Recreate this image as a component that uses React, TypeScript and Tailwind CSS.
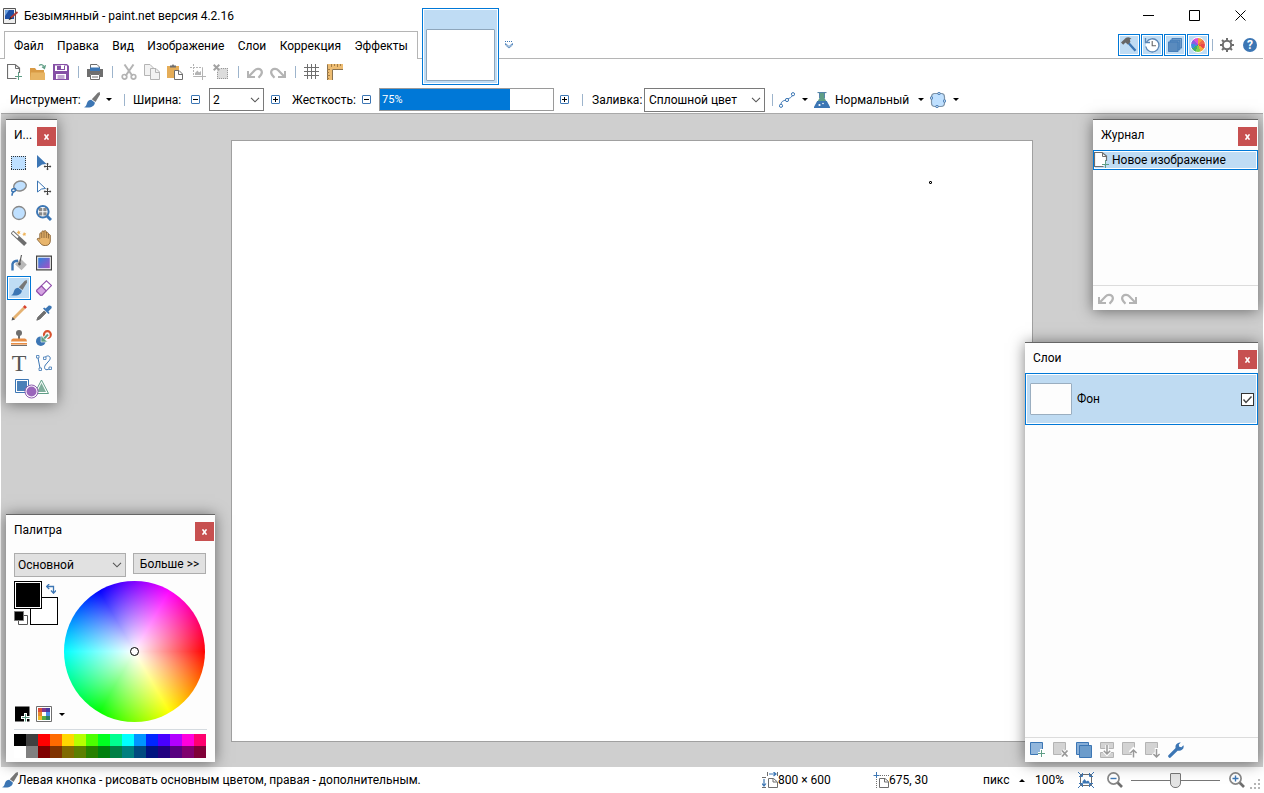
import { useState } from 'react'
import type { ReactNode } from 'react'

const GREY = '#6e6e6e'
const BLUE = '#3c76b4'
const GREEN = '#5f9e86'
const OFF = '#b4b4b4'

function Icon({ children, size = 16, box = 16 }: { children: ReactNode; size?: number; box?: number }) {
  return (
    <svg width={size} height={size} viewBox={`0 0 ${box} ${box}`} fill="none" className="shrink-0" aria-hidden="true">
      {children}
    </svg>
  )
}

function NewFile() {
  return (
    <Icon>
      <path d="M9.5 14.5H.5V.5H8L12.5 4V9" stroke={GREY} strokeWidth="1.2" fill="#fff" />
      <path d="M8.5 1V4.5H12.5" stroke={GREY} />
      <path d="M11.5 8V16M8 12.5H15" stroke={GREEN} />
    </Icon>
  )
}

function Brush() {
  return (
    <Icon>
      <path d="M15.8 0 16 2.5 11.5 10 7.8 7.2 13.8.8Z" fill="#777" />
      <path d="M7.2 7.8 10.8 10.6C11 14 7 16.6 0 15.2 2.5 14.5 2.2 13 3 11 3.8 8.8 5.5 7.8 7.2 7.8Z" fill={BLUE} />
    </Icon>
  )
}

function Undo({ color = OFF }: { color?: string }) {
  return (
    <Icon>
      <path d="M1 7V13H8" stroke={color} strokeWidth="2" />
      <path d="M1.5 12.8 7.5 6.5C9.5 4.4 12.5 4.4 14 6 15.6 8 14.8 10.8 11.5 13.8" stroke={color} strokeWidth="2.2" />
    </Icon>
  )
}

function Redo({ color = OFF }: { color?: string }) {
  return (
    <Icon>
      <path d="M15 7V13H8" stroke={color} strokeWidth="2" />
      <path d="M14.5 12.8 8.5 6.5C6.5 4.4 3.5 4.4 2 6 .4 8 1.2 10.8 4.5 13.8" stroke={color} strokeWidth="2.2" />
    </Icon>
  )
}

function Layers({ size = 16 }: { size?: number }) {
  return (
    <Icon size={size}>
      <path d="M4.5.5H15.5V11.5H4.5Z" fill="#7ea6cf" stroke={BLUE} />
      <path d="M2.5 2.5H13.5V13.5H2.5Z" fill="#6795c4" stroke={BLUE} />
      <path d="M.5 4.5H11.5V15.5H.5Z" fill="#5a8bbe" stroke={BLUE} />
    </Icon>
  )
}

function Caret() {
  return <span className="block h-0 w-0 shrink-0 border-x-[3px] border-t-[3px] border-x-transparent border-t-black" />
}

function Chevron() {
  return (
    <svg width="10" height="6" viewBox="0 0 10 6" fill="none" className="pointer-events-none absolute inset-y-0 right-1 my-auto" aria-hidden="true">
      <path d="M1 .8 5 4.8 9 .8" stroke="#555" strokeWidth="1.1" />
    </svg>
  )
}

function Sep() {
  return (
    <span className="flex h-3 w-1 shrink-0 justify-center">
      <span className="w-px bg-[#9db4cc]" />
    </span>
  )
}

const fileTools: { label: string; icon: ReactNode }[][] = [
  [
    { label: 'Создать', icon: <NewFile /> },
    {
      label: 'Открыть',
      icon: (
        <Icon>
          <path d="M0 16V4H5L6.5 6H14V16Z" fill="#d99a44" />
          <path d="M0 16 1 8.5H15V16Z" fill="#e8b564" />
          <path d="M9 1.5C11.5-.2 14 1 14.5 4M12 2.8 14.5 4.5 15.5 1.2" stroke={GREEN} strokeWidth="1.2" />
        </Icon>
      ),
    },
    {
      label: 'Сохранить',
      icon: (
        <Icon>
          <path d="M0 0H14L16 2V16H0Z" fill="#8650a6" />
          <path d="M2 1.5H14V7H2ZM3 10H13V15H3Z" fill="#fff" />
          <path d="M4 2H12V6H4Z" fill="#8650a6" />
          <path d="M8 1H11V5H8Z" fill="#fff" />
          <path d="M4.5 12H11.5M4.5 14H11.5" stroke="#8650a6" />
        </Icon>
      ),
    },
  ],
  [
    {
      label: 'Печать',
      icon: (
        <Icon>
          <path d="M3.5 6V.5H10L12.5 3V6" fill="#fff" stroke={GREY} />
          <path d="M0 5H16V13H13V10H3V13H0Z" fill={GREY} />
          <path d="M3 3.5H13V7H3Z" fill={BLUE} />
          <path d="M3.5 10.5H12.5V15.5H3.5Z" fill="#fff" stroke={GREY} />
          <path d="M5 13H11" stroke={GREY} />
        </Icon>
      ),
    },
  ],
  [
    {
      label: 'Вырезать',
      icon: (
        <Icon>
          <path d="M3.5.5 11.5 12M12.5.5 4.5 12" stroke={OFF} strokeWidth="2" />
          <circle cx="3.5" cy="12.8" r="2.3" stroke={OFF} strokeWidth="1.7" />
          <circle cx="12.5" cy="12.8" r="2.3" stroke={OFF} strokeWidth="1.7" />
        </Icon>
      ),
    },
    {
      label: 'Копировать',
      icon: (
        <Icon>
          <path d="M.5.5H6L9.5 4V11.5H.5Z" fill="#f2f2f2" stroke={OFF} />
          <path d="M6.5 4.5H12L15.5 8V15.5H6.5Z" fill="#f2f2f2" stroke={OFF} />
          <path d="M11.5 5V8.5H15" stroke={OFF} />
        </Icon>
      ),
    },
    {
      label: 'Вставить',
      icon: (
        <Icon>
          <path d="M0 2H12V14H0Z" fill="#e5ad58" />
          <path d="M3 3.5V1.5H5L6 0 7 1.5H9V3.5Z" fill={GREY} />
          <path d="M7.5 6.5H12L15.5 10V15.5H7.5Z" fill="#fff" stroke={GREY} />
          <path d="M11.5 7V10.5H15" stroke={GREY} />
        </Icon>
      ),
    },
    {
      label: 'Обрезать',
      icon: (
        <Icon>
          <path d="M3.5 0V12.5H16M0 3.5H12.5V16" stroke={OFF} strokeDasharray="2 1" />
          <path d="M3.5 12.5H15.5M12.5 4V15.5" stroke={OFF} />
          <path d="M5 11V9L7.5 6.5 9 8.5 11 7V11Z" fill={OFF} />
        </Icon>
      ),
    },
    {
      label: 'Отменить выделение',
      icon: (
        <Icon>
          <path d="M4 4H15V15H4Z" fill="#dcdcdc" />
          <path d="M8 4.5H15M4.5 8V15M4 14.5H15M14.5 4V15" stroke="#999" strokeDasharray="1 1" />
          <path d="M.7.7 6.3 6.3M6.3.7.7 6.3" stroke="#a2a2a2" strokeWidth="2" />
        </Icon>
      ),
    },
  ],
  [
    { label: 'Отменить', icon: <Undo /> },
    { label: 'Вернуть', icon: <Redo /> },
  ],
  [
    {
      label: 'Сетка',
      icon: (
        <Icon>
          <path d="M3.5 0V15M7.5 0V15M11.5 0V15M0 3.5H15M0 7.5H15M0 11.5H15" stroke={GREY} />
        </Icon>
      ),
    },
    {
      label: 'Линейки',
      icon: (
        <Icon>
          <path d="M0 0H16V5H5V16H0Z" fill="#edbc72" />
          <path d="M.5 16V.5M5.5 5.5V16M5.5 5.5H16" stroke="#8a7350" />
          <path d="M4.5 0V3M7.5 0V2M10.5 0V3M13.5 0V2M0 5.5H3M0 8.5H2M0 11.5H3M0 14.5H2" stroke="#a47d45" />
        </Icon>
      ),
    },
  ],
]

const paintTools: { label: string; icon: ReactNode }[] = [
  {
    label: 'Выделение прямоугольной области',
    icon: (
      <Icon>
        <path d="M0 1H15V15H0Z" fill="#bfe0ff" />
        <path d="M0 1.5H15M0 14.5H15M.5 1V15M14.5 1V15" stroke="#333" strokeDasharray="1 1" />
      </Icon>
    ),
  },
  {
    label: 'Перемещение выделенных пикселей',
    icon: (
      <Icon>
        <path d="M1 0 10.5 9 6 9.5 1 13Z" fill={BLUE} />
        <path d="M11.5 8V15M8 11.5H15" stroke="#444" />
        <path d="M10 9.2 11.5 7.7 13 9.2ZM10 13.8 11.5 15.3 13 13.8ZM9.2 10 7.7 11.5 9.2 13ZM13.8 10 15.3 11.5 13.8 13Z" fill="#444" />
      </Icon>
    ),
  },
  {
    label: 'Лассо',
    icon: (
      <Icon>
        <ellipse cx="9" cy="6" rx="6.3" ry="4.9" transform="rotate(-14 9 6)" fill="#bfe0ff" stroke="#888" strokeWidth="1.4" />
        <path d="M3.5 8.5C0 8.5-.2 11.5 2 11.8 5 12 5.5 8.8 3.5 8.5M3 11.5C1 12.5 1 14 1 15.8" stroke={BLUE} strokeWidth="1.5" />
      </Icon>
    ),
  },
  {
    label: 'Перемещение области выделения',
    icon: (
      <Icon>
        <path d="M1.5 1 9.5 8.5 5.5 9 1.5 12Z" fill="#fff" stroke={BLUE} />
        <path d="M11.5 8V15M8 11.5H15" stroke="#444" />
        <path d="M10 9.2 11.5 7.7 13 9.2ZM10 13.8 11.5 15.3 13 13.8ZM9.2 10 7.7 11.5 9.2 13ZM13.8 10 15.3 11.5 13.8 13Z" fill="#444" />
      </Icon>
    ),
  },
  {
    label: 'Выделение овальной области',
    icon: (
      <Icon>
        <circle cx="8" cy="8" r="6.5" fill="#bfe0ff" stroke="#888" strokeWidth="1.3" />
      </Icon>
    ),
  },
  {
    label: 'Масштаб',
    icon: (
      <Icon>
        <path d="M11 11 15 15" stroke={BLUE} strokeWidth="3" />
        <circle cx="6.8" cy="6.8" r="5.8" fill="#fff" stroke={BLUE} strokeWidth="2" />
        <path d="M3 3H6.3V6.3H3ZM7.3 3H10.6V6.3H7.3ZM3 7.3H6.3V10.6H3ZM7.3 7.3H10.6V10.6H7.3Z" fill="#888" />
      </Icon>
    ),
  },
  {
    label: 'Волшебная палочка',
    icon: (
      <Icon>
        <path d="M1 2 14.5 14.5" stroke={GREY} strokeWidth="4" />
        <path d="M1.5 2.5 7 7.6" stroke="#fff" strokeWidth="2" />
        <path d="M7 0 8 1.5 9.5 1.2 8.8 2.6 9.5 4 8 3.6 7 5 6.8 3.3 5.4 2.6 6.8 1.8ZM13 2 13.8 3.2 15.2 3 14.4 4.2 15 5.6 13.6 5.2 12.6 6.2 12.4 4.8 11.2 4.2 12.5 3.6Z" fill="#efb45a" />
      </Icon>
    ),
  },
  {
    label: 'Перемещение',
    icon: (
      <Icon>
        <path d="M3.8 9V3.5Q4.8 2 5.8 3.5V1.6Q7 0 8 1.6V1.2Q9.2-.2 10.3 1.4V3Q11.4 1.8 12.4 3.2V5Q13.5 4 14.3 5.2V11Q14 15.3 9.8 15.5H8Q5.5 15.3 4 12.8L1 9.2Q1.8 7.3 3.8 9Z" fill="#e8b56c" stroke="#8a6435" strokeWidth=".9" />
        <path d="M5.8 3.5V8M8 1.8V8M10.3 2V8M12.4 4V8.5" stroke="#8a6435" strokeWidth=".9" />
      </Icon>
    ),
  },
  {
    label: 'Заливка',
    icon: (
      <Icon>
        <path d="M9.5 3.5 15.8 9.8 10.5 15.2 4 9.2Z" fill="#b9b9b9" />
        <path d="M10.5 0 8.5 9" stroke="#555" strokeWidth="1.1" />
        <circle cx="8.5" cy="9" r="1.4" fill="#555" />
        <path d="M1.5 15.5V9Q2.5 5.8 7 5.8" stroke={BLUE} strokeWidth="2.4" />
      </Icon>
    ),
  },
  {
    label: 'Градиент',
    icon: (
      <Icon>
        <defs>
          <linearGradient id="grad" x1="0" y1="0" x2="1" y2="1">
            <stop offset="0" stopColor="#2b83dd" />
            <stop offset="1" stopColor="#a64fc4" />
          </linearGradient>
        </defs>
        <path d="M.6 1.1H15.4V14.9H.6Z" fill="#fff" stroke="#444" strokeWidth="1.2" />
        <path d="M2.2 2.7H13.8V13.3H2.2Z" fill="url(#grad)" />
      </Icon>
    ),
  },
  { label: 'Кисть', icon: <Brush /> },
  {
    label: 'Ластик',
    icon: (
      <Icon>
        <path d="M10.5.8 15.5 5.5 6 15.2H4.5L.8 11.5V10.2Z" fill="#fff" stroke="#9250ac" strokeWidth="1.1" />
        <path d="M5.5 6 10.2 10.8 6 15.2H4.5L.8 11.5V10.2Z" fill="#d5a4e2" stroke="#9250ac" strokeWidth="1.1" />
      </Icon>
    ),
  },
  {
    label: 'Карандаш',
    icon: (
      <Icon>
        <path d="M2.5 13.5 13 3" stroke="#e5b272" strokeWidth="2.8" />
        <path d="M.5 15.5 1.5 12 4 14.5Z" fill="#555" />
        <path d="M12.8 1 15 3.2" stroke="#d8432e" strokeWidth="2.6" />
      </Icon>
    ),
  },
  {
    label: 'Пипетка',
    icon: (
      <Icon>
        <path d="M.8 15.2 2 12.2 8.2 6 10 7.8 3.8 14Z" fill={GREY} stroke={GREY} />
        <path d="M7 3.5 12.5 9 13.6 8 12.4 6.4 15.5 3.2Q16.5.2 12.8.5L9.6 3.6 8.2 2.4Z" fill={BLUE} />
      </Icon>
    ),
  },
  {
    label: 'Штамп',
    icon: (
      <Icon>
        <circle cx="8" cy="3" r="3" fill={GREY} />
        <path d="M7 5H9V9H7Z" fill={GREY} />
        <path d="M2 8.5H14Q16 9 16 11.5H0Q0 9 2 8.5Z" fill="#e78d45" />
        <path d="M0 13H16V14.6H0Z" fill="#e78d45" />
        <path d="M0 15.5H16" stroke={GREY} />
      </Icon>
    ),
  },
  {
    label: 'Замена цвета',
    icon: (
      <Icon>
        <circle cx="4.8" cy="11.2" r="4.8" fill={BLUE} />
        <circle cx="11.4" cy="4.6" r="3.4" stroke="#d8532f" strokeWidth="2.2" />
        <path d="M12.5 4.5 6.5 10.5" stroke="#fff" strokeWidth="4" />
        <path d="M12 4.5 7 9.8" stroke={GREEN} strokeWidth="2" />
        <path d="M5 5.5V12H11.5Z" fill={GREEN} stroke="#fff" strokeWidth=".6" />
      </Icon>
    ),
  },
  {
    label: 'Текст',
    icon: <span className="font-['Liberation_Serif',serif] text-[24px] leading-6 text-[#555]">T</span>,
  },
  {
    label: 'Линия или кривая',
    icon: (
      <Icon>
        <path d="M1.8 2 4.2 14M9 2.5C12-1 15.8 2 13.5 5.2L9.4 10C7 13.5 10 16.5 13.5 13.5" stroke={BLUE} />
        <path d="M.5.5H3V3H.5ZM3 13H5.5V15.5H3ZM7.5 2H10V4.5H7.5ZM13 12H15.5V14.5H13Z" fill="#fff" stroke={BLUE} strokeWidth=".8" />
      </Icon>
    ),
  },
]

const panelToggles: { label: string; icon: ReactNode }[] = [
  {
    label: 'Инструменты',
    icon: (
      <Icon>
        <path d="M7.5 6 14.5 13.8" stroke={BLUE} strokeWidth="2.4" />
        <path d="M0 5.5 5 .8Q8.5-.5 10.5 2L8.8 2.2 9.4 5 6.8 7.4 4.5 5.4 2.2 7.8Z" fill="#666" />
      </Icon>
    ),
  },
  {
    label: 'Журнал',
    icon: (
      <Icon>
        <circle cx="8.3" cy="8.3" r="6.5" fill="#fff" />
        <path d="M2.6 5A6.6 6.6 0 1 1 1.8 9.5" stroke="#5b86b5" strokeWidth="1.3" />
        <path d="M1.5 1V5.5H6" stroke="#5b86b5" strokeWidth="1.3" />
        <path d="M8.2 4V8.7H12" stroke="#666" strokeWidth="1.1" />
      </Icon>
    ),
  },
  { label: 'Слои', icon: <Layers size={14} /> },
  {
    label: 'Палитра',
    icon: (
      <span className="h-4 w-4 shrink-0 rounded-full border border-white bg-[conic-gradient(#f59a3c_0_40deg,#ef6a4a_40deg_80deg,#e84a4a_80deg_120deg,#f5a83c_120deg_160deg,#7ccf4a_160deg_200deg,#3fae6a_200deg_240deg,#3a8fe0_240deg_280deg,#8a5be0_280deg_320deg,#e04fd0_320deg)]" />
    ),
  },
]

const layerTools: { label: string; icon: ReactNode }[] = [
  {
    label: 'Добавить слой',
    icon: (
      <Icon>
        <path d="M.5.5H12.5V12.5H.5Z" fill="#93b7dc" stroke={BLUE} />
        <path d="M11.5 7V16M8 11.5H16" stroke="#fff" strokeWidth="3" />
        <path d="M11.5 8V15M8 11.5H15" stroke={GREEN} />
      </Icon>
    ),
  },
  {
    label: 'Удалить слой',
    icon: (
      <Icon>
        <path d="M.5.5H12.5V12.5H.5Z" fill="#d3d3d3" stroke={OFF} />
        <path d="M9 8.5 14.5 14.5M14.5 8.5 9 14.5" stroke="#fff" strokeWidth="3.5" />
        <path d="M9 8.5 14.5 14.5M14.5 8.5 9 14.5" stroke="#999" strokeWidth="1.8" />
      </Icon>
    ),
  },
  {
    label: 'Создать копию слоя',
    icon: (
      <Icon>
        <path d="M.5.5H12.5V12.5H.5Z" fill="#87aed7" stroke={BLUE} />
        <path d="M3.5 3.5H15.5V15.5H3.5Z" fill="#6c9ccb" stroke={BLUE} />
      </Icon>
    ),
  },
  {
    label: 'Объединить со следующим слоем',
    icon: (
      <Icon>
        <path d="M1.5.5H14.5V6.5H1.5ZM1.5 10.5H14.5V15.5H1.5Z" fill="#d3d3d3" stroke={OFF} />
        <path d="M8 3V12M4.5 8.5 8 12 11.5 8.5" stroke="#fff" strokeWidth="3.4" />
        <path d="M8 3V12M4.8 8.8 8 12 11.2 8.8" stroke="#999" strokeWidth="1.5" />
      </Icon>
    ),
  },
  {
    label: 'Переместить слой выше',
    icon: (
      <Icon>
        <path d="M.5.5H12.5V12.5H.5Z" fill="#d3d3d3" stroke={OFF} />
        <path d="M11.5 16V7M8 10.5 11.5 7 15 10.5" stroke="#fff" strokeWidth="3.4" />
        <path d="M11.5 15.5V8M8.4 11 11.5 8 14.6 11" stroke="#999" strokeWidth="1.5" />
      </Icon>
    ),
  },
  {
    label: 'Переместить слой ниже',
    icon: (
      <Icon>
        <path d="M.5.5H12.5V12.5H.5Z" fill="#d3d3d3" stroke={OFF} />
        <path d="M11.5 6V15M8 11.5 11.5 15 15 11.5" stroke="#fff" strokeWidth="3.4" />
        <path d="M11.5 7V14.8M8.4 12 11.5 15 14.6 12" stroke="#999" strokeWidth="1.5" />
      </Icon>
    ),
  },
  {
    label: 'Свойства слоя',
    icon: (
      <Icon>
        <path d="M1.8 14.2 9 7" stroke={BLUE} strokeWidth="3.2" strokeLinecap="round" />
        <path d="M12.8.6 10.8 2.6 11.2 4.8 13.4 5.2 15.4 3.2Q16.4 6 14 7.8 11.6 9.4 9.4 8.2L7.8 6.6Q6.8 4 8.6 2 10.4 0 12.8.6Z" fill={BLUE} />
      </Icon>
    ),
  },
]

const menu = ['Файл', 'Правка', 'Вид', 'Изображение', 'Слои', 'Коррекция', 'Эффекты']

const swatches = [
  '#000000', '#404040', '#ff0000', '#ff6a00', '#ffd800', '#b6ff00', '#4cff00', '#00ff21',
  '#00ff90', '#00ffff', '#0094ff', '#0026ff', '#4800ff', '#b200ff', '#ff00dc', '#ff006e',
  '#ffffff', '#808080', '#7f0000', '#7f3300', '#7f6a00', '#5b7f00', '#267f00', '#007f0e',
  '#007f46', '#007f7f', '#004a7f', '#00137f', '#21007f', '#57007f', '#7f006e', '#7f0037',
]

function IconButton({ label, children }: { label: string; children: ReactNode }) {
  return (
    <button aria-label={label} className="flex h-4 w-4 shrink-0 items-center justify-center">
      {children}
    </button>
  )
}

function Stepper({ plus }: { plus?: boolean }) {
  return (
    <button
      aria-label={plus ? 'Увеличить' : 'Уменьшить'}
      className="flex h-[9px] w-[9px] shrink-0 items-center justify-center rounded-[1px] border border-[#3c76b4]"
    >
      <svg width="5" height="5" viewBox="0 0 5 5" className="shrink-0" aria-hidden="true">
        <path d={plus ? 'M0 2.5H5M2.5 0V5' : 'M0 2.5H5'} stroke="#000" />
      </svg>
    </button>
  )
}

function Window({ title, className, children }: { title: string; className: string; children: ReactNode }) {
  return (
    <section className={`absolute flex flex-col border-t border-[#666] bg-[#fdfdfd] shadow-[0_1px_14px_rgba(0,0,0,0.5)] ${className}`}>
      <header className="flex h-[30px] shrink-0 items-center justify-between pr-px pl-2">
        <h2>{title}</h2>
        <button
          aria-label="Закрыть"
          className="mt-[3px] flex h-[19px] w-[19px] items-center justify-center bg-[#c75050]"
        >
          <svg width="5" height="6" viewBox="0 0 5 6" aria-hidden="true">
            <path d="M.5.3 4.5 5.7M4.5.3.5 5.7" stroke="#fff" strokeWidth="1.5" />
          </svg>
        </button>
      </header>
      {children}
    </section>
  )
}

function TitleBar() {
  return (
    <div className="flex h-[31px] items-center pr-px pl-[3px]">
      <Icon>
        <path d="M.5.5H12.5V15.5H.5Z" fill="#eee" stroke="#555" />
        <path d="M2 2H11V11H2Z" fill="#1d4fa3" />
        <path d="M2 2H6L2 8Z" fill="#6fa2df" />
        <path d="M14.5 4 7.5 10" stroke="#b03a32" strokeWidth="1.8" />
        <path d="M7.5 9 9 10.8 5.5 12.2Z" fill="#222" />
      </Icon>
      <h1 className="ml-[5px]">Безымянный - paint.net версия 4.2.16</h1>
      <div className="ml-auto flex">
        {[
          { label: 'Свернуть', d: 'M0 5.5H11' },
          { label: 'Развернуть', d: 'M.5.5H10.5V10.5H.5Z' },
          { label: 'Закрыть', d: 'M.5.5 10.5 10.5M10.5.5.5 10.5' },
        ].map((b) => (
          <button key={b.label} aria-label={b.label} className="flex h-[31px] w-[46px] items-center justify-center">
            <Icon size={11} box={11}>
              <path d={b.d} stroke="#000" />
            </Icon>
          </button>
        ))}
      </div>
    </div>
  )
}

function MenuBar() {
  return (
    <div className="mr-px flex h-7">
      <div className="w-1 border-b border-[#b5b5b5]" />
      <nav className="flex w-[414px] items-center justify-between border-x border-t border-[#b5b5b5] px-[9px]">
        {menu.map((m) => (
          <button key={m}>{m}</button>
        ))}
      </nav>
      <div className="flex flex-1 items-center border-b border-[#b5b5b5]">
        {/* image list: the selected thumbnail hangs over the neighbouring rows */}
        <div className="relative ml-1 h-full w-[77px]">
          <button
            aria-label="Безымянный"
            className="absolute -top-[23px] left-0 flex h-[77px] w-[77px] items-end border border-[#0078d7] bg-[#bfdcf4] p-[3px] ring-1 ring-white ring-inset"
          >
            <span className="h-[52px] w-full rounded-[1px] border border-[#8ea6bb] bg-white" />
          </button>
        </div>
        <button aria-label="Список изображений" className="ml-1.5">
          <Icon size={8} box={8}>
            <path d="M0 .5H8" stroke="#3c76b4" strokeDasharray="1 1" />
            <path d="M.5 2.5V4L4 7 7.5 4V2.5L4 5.5Z" fill="#fff" stroke="#3c76b4" strokeWidth=".8" />
          </Icon>
        </button>
        <div className="ml-auto flex items-center pr-[5px]">
          <div className="flex gap-px">
            {panelToggles.map((t) => (
              <button
                key={t.label}
                aria-label={t.label}
                className="flex h-[22px] w-[22px] items-center justify-center border border-[#0078d7] bg-[#bfdcf4] ring-1 ring-white ring-inset"
              >
                {t.icon}
              </button>
            ))}
          </div>
          <span className="mx-[3px] h-3 w-px bg-[#9db4cc]" />
          <div className="ml-[3px] flex gap-[7px]">
            <IconButton label="Параметры">
              <Icon>
                <circle cx="8" cy="8" r="4.2" stroke={GREY} strokeWidth="2" />
                <path d="M8 1V3.5M8 12.5V15M1 8H3.5M12.5 8H15M3 3 4.8 4.8M11.2 11.2 13 13M13 3 11.2 4.8M4.8 11.2 3 13" stroke={GREY} strokeWidth="2" />
              </Icon>
            </IconButton>
            <IconButton label="Справка">
              <span className="flex h-3.5 w-3.5 items-center justify-center rounded-full bg-[#3c76b4] text-[12px] leading-3 font-bold text-white">
                ?
              </span>
            </IconButton>
          </div>
        </div>
      </div>
    </div>
  )
}

function FileBar() {
  return (
    <div className="flex h-[27px] items-start gap-[7px] pt-[5px] pl-[7px]">
      {fileTools.flatMap((group, i) => [
        i > 0 && (
          <span key={`sep${i}`} className="flex h-4 items-center">
            <Sep />
          </span>
        ),
        ...group.map((t) => (
          <IconButton key={t.label} label={t.label}>
            {t.icon}
          </IconButton>
        )),
      ])}
    </div>
  )
}

function OptionsBar() {
  const [hardness, setHardness] = useState(75)
  return (
    <div className="mx-px flex h-7 items-center border-b border-[#a9a9a9]">
      <span className="ml-[9px] w-[74px]">Инструмент:</span>
      <button aria-label="Выбор инструмента" className="flex items-center gap-1.5">
        <Brush />
        <Caret />
      </button>
      <span className="ml-2.5"><Sep /></span>
      <label htmlFor="width" className="ml-[7px] w-[58px]">Ширина:</label>
      <Stepper />
      <div className="relative ml-[9px] w-[55px]">
        <select id="width" className="h-[23px] w-full appearance-none border border-[#7a7a7a] bg-white pl-[3px]">
          <option>2</option>
        </select>
        <Chevron />
      </div>
      <span className="ml-[7px] flex"><Stepper plus /></span>
      <label htmlFor="hardness" className="ml-3 w-[70px]">Жесткость:</label>
      <Stepper />
      <div className="relative ml-2 h-[23px] w-[175px] border border-[#9a9a9a] bg-white">
        <div className="flex h-full items-center bg-[#0078d7] pl-[2px] text-[11px] text-white" style={{ width: `${hardness}%` }}>
          {hardness}%
        </div>
        <input
          id="hardness"
          type="range"
          value={hardness}
          onChange={(e) => setHardness(Number(e.target.value))}
          className="absolute inset-0 h-full w-full opacity-0"
        />
      </div>
      <span className="ml-1.5 flex"><Stepper plus /></span>
      <span className="ml-[11px]"><Sep /></span>
      <label htmlFor="fill" className="ml-2 w-[52px]">Заливка:</label>
      <div className="relative w-[121px]">
        <select id="fill" className="h-6 w-full appearance-none border border-[#7a7a7a] bg-white pl-1">
          <option>Сплошной цвет</option>
        </select>
        <Chevron />
      </div>
      <span className="ml-[5px]"><Sep /></span>
      <button aria-label="Сглаживание" className="ml-[5px] flex items-center gap-[7px]">
        <Icon>
          <path d="M2 13C2 8 6 9 7.5 7.5S12 7 14 2.5" stroke={BLUE} />
          <circle cx="2" cy="13.8" r="1.6" fill="#fff" stroke={BLUE} />
          <circle cx="8" cy="8" r="1.6" fill="#fff" stroke={BLUE} />
          <circle cx="14" cy="2.2" r="1.6" fill="#fff" stroke={BLUE} />
        </Icon>
        <Caret />
      </button>
      <button aria-label="Режим смешивания" className="ml-1.5 flex items-center">
        <Icon>
          <path d="M5.5 1V6L1 14H15L10.5 6V1Z" fill={GREEN} />
          <path d="M3.5.5H12.5" stroke="#5585a8" strokeWidth="1.2" />
          <path d="M5.5 1V6M10.5 1V6" stroke="#5585a8" />
          <path d="M3.2 9H12.8L16 15V16H0V15Z" fill={BLUE} />
          <circle cx="5.5" cy="13" r="1.1" fill="#fff" />
          <circle cx="9" cy="11.5" r=".8" fill="#fff" />
        </Icon>
        <span className="ml-[5px] w-[83px] text-left">Нормальный</span>
        <Caret />
      </button>
      <button aria-label="Форма выделения" className="ml-1.5 flex items-center gap-[7px]">
        <Icon>
          <path d="M4 1.5H12Q14.5 2 14.5 5V11Q14.5 14.5 11 14.5H5Q1.5 14.5 1.5 11V5Q1.5 2 4 1.5Z" fill="#bfe0ff" stroke="#7f94a8" strokeWidth="1.2" />
          <path d="M8 .5H10V2.5H8ZM.5 5H2.5V7H.5ZM13.5 8H15.5V10H13.5ZM6 13.5H8V15.5H6Z" fill="#fff" stroke={BLUE} strokeWidth=".8" />
        </Icon>
        <Caret />
      </button>
    </div>
  )
}

function ToolsWindow() {
  const [tool, setTool] = useState('Кисть')
  return (
    <Window title="И..." className="top-[5px] left-[5px] w-[51px]">
      <div className="mt-px grid grid-cols-[24px_24px] gap-px pl-px">
        {paintTools.map((t) => (
          <button
            key={t.label}
            aria-label={t.label}
            onClick={() => setTool(t.label)}
            className={`flex h-6 w-6 items-center justify-center ${
              t.label === tool ? 'border border-[#0078d7] bg-[#bfdcf4] ring-1 ring-white ring-inset' : ''
            }`}
          >
            {t.icon}
          </button>
        ))}
      </div>
      <button aria-label="Фигуры" className="flex h-7 justify-center pt-1">
        <svg width="35" height="20" viewBox="0 0 35 20" aria-hidden="true">
          <path d="M1.5.5H14.5V13.5H1.5Z" fill="#fff" stroke={BLUE} />
          <path d="M3 2H13V12H3Z" fill="#4a80b8" />
          <path d="M27.5 1 34.5 14.5H20.5Z" fill="#fff" stroke={GREEN} />
          <path d="M27.5 4 32 13H23Z" fill="#7fae9b" />
          <circle cx="17.5" cy="12.5" r="6.5" fill="#fff" stroke="#8c5bae" />
          <circle cx="17.5" cy="12.5" r="5" fill="#9a66bb" />
        </svg>
      </button>
    </Window>
  )
}

function HistoryWindow() {
  return (
    <Window title="Журнал" className="top-[5px] right-[5px] h-[191px] w-[165px]">
      <ul className="flex-1">
        <li className="flex h-5 items-center gap-0.5 border border-[#0078d7] bg-[#bfdcf4] ring-1 ring-white ring-inset">
          <NewFile />
          <span>Новое изображение</span>
        </li>
      </ul>
      <div className="flex h-[25px] items-center gap-[7px] border-t border-[#dcdcdc] pl-[5px]">
        <IconButton label="Отменить"><Undo /></IconButton>
        <IconButton label="Вернуть"><Redo /></IconButton>
      </div>
    </Window>
  )
}

function LayersWindow() {
  const [visible, setVisible] = useState(true)
  return (
    <Window title="Слои" className="right-[5px] bottom-[5px] h-[420px] w-[233px]">
      <div className="flex-1">
        <label className="flex h-[52px] items-center border border-[#0078d7] bg-[#bfdbf2] pr-[3px] pl-1 ring-1 ring-white ring-inset">
          <span className="h-8 w-[42px] rounded-[1px] border border-[#9aaec0] bg-[#fdfdfd]" />
          <span className="ml-[5px]">Фон</span>
          <input
            type="checkbox"
            checked={visible}
            onChange={(e) => setVisible(e.target.checked)}
            className="peer ml-auto h-[13px] w-[13px] appearance-none border border-[#333] bg-white"
          />
          <svg
            width="13"
            height="13"
            viewBox="0 0 13 13"
            fill="none"
            className="pointer-events-none invisible -ml-[13px] peer-checked:visible"
            aria-hidden="true"
          >
            <path d="M2.5 6.5 5 9.5 10.5 3.5" stroke="#444" strokeWidth="1.4" />
          </svg>
        </label>
      </div>
      <div className="flex h-[25px] items-center gap-[7px] border-t border-[#dcdcdc] pl-[5px]">
        {layerTools.map((t) => (
          <IconButton key={t.label} label={t.label}>
            {t.icon}
          </IconButton>
        ))}
      </div>
    </Window>
  )
}

function PaletteWindow() {
  return (
    <Window title="Палитра" className="bottom-[5px] left-[5px] h-[248px] w-[209px]">
      <div className="mt-2 flex items-start gap-[7px] px-2">
        <div className="relative w-28">
          <select aria-label="Цвет" className="h-6 w-full appearance-none border border-[#adadad] bg-[#e1e1e1] pl-[3px]">
            <option>Основной</option>
          </select>
          <Chevron />
        </div>
        <button className="h-[21px] w-[73px] border border-[#adadad] bg-[#e1e1e1]">Больше &gt;&gt;</button>
      </div>
      <div className="mt-1 flex justify-between pr-[10px] pl-2">
        <div className="flex w-[50px] flex-col justify-between">
          <div className="relative h-11 w-11">
            <button aria-label="Дополнительный цвет" className="absolute right-0 bottom-0 h-7 w-7 border border-black bg-white" />
            <button aria-label="Основной цвет" className="absolute top-0 left-0 h-7 w-7 border border-black bg-black ring-1 ring-white ring-inset" />
            <button aria-label="Поменять цвета" className="absolute top-[3px] left-8">
              <Icon size={10} box={10}>
                <path d="M1 2.5H7.5V8.5" stroke={BLUE} strokeWidth="1.3" />
                <path d="M3.2 0 .6 2.5 3.2 5M5 6.5 7.5 9.2 10 6.5" stroke={BLUE} strokeWidth="1.3" />
              </Icon>
            </button>
            <button aria-label="Сбросить цвета" className="absolute bottom-0 left-0">
              <Icon size={14} box={14}>
                <path d="M4.5 4.5H13.5V13.5H4.5Z" fill="#fff" stroke="#555" />
                <path d="M.5.5H9.5V9.5H.5Z" fill="#000" stroke="#777" />
              </Icon>
            </button>
          </div>
          <div className="flex items-center gap-1.5">
            <IconButton label="Добавить цвет">
              <Icon>
                <path d="M1 .5H15.5V15.5H1Z" fill="#000" />
                <path d="M11.5 7V16M7 11.5H16" stroke="#fff" strokeWidth="3" />
                <path d="M11.5 8V15.5M8 11.5H15.5" stroke={GREEN} />
              </Icon>
            </IconButton>
            <button aria-label="Палитры" className="flex items-center gap-[7px]">
              <Icon>
                <path d="M.5.5H15.5V15.5H.5Z" fill="#fff" stroke={GREY} />
                <path d="M2 2H6V6H2Z" fill="#dd4b39" />
                <path d="M6 2H10V6H6Z" fill="#803a8c" />
                <path d="M10 2H14V6H10Z" fill="#4a3aa0" />
                <path d="M2 6H6V10H2Z" fill="#e98a2e" />
                <path d="M10 6H14V10H10Z" fill="#4b8be6" />
                <path d="M2 10H6V14H2Z" fill="#f0b929" />
                <path d="M6 10H10V14H6Z" fill="#55ad45" />
                <path d="M10 10H14V14H10Z" fill="#2c7f62" />
              </Icon>
              <Caret />
            </button>
          </div>
        </div>
        <div className="flex h-[141px] w-[141px] items-center justify-center rounded-full bg-[radial-gradient(closest-side,#fff,#fff0),conic-gradient(from_90deg,#f00,#ff0,#0f0,#0ff,#00f,#f0f,#f00)]">
          <span className="h-[9px] w-[9px] rounded-full border border-black bg-white" />
        </div>
      </div>
      <div className="mx-2 mt-[7px] border-t border-[#d5dbe0]" />
      <div className="mt-1 grid grid-cols-[repeat(16,12px)] pl-2">
        {swatches.map((c) => (
          <button key={c} aria-label={c} className="h-3 w-3" style={{ backgroundColor: c }} />
        ))}
      </div>
    </Window>
  )
}

function StatusBar() {
  return (
    <footer className="flex h-[26px] items-center pr-1 pl-[2px]">
      <Brush />
      <p>Левая кнопка - рисовать основным цветом, правая - дополнительным.</p>
      <div className="ml-auto flex w-[111px] items-center">
        <Icon>
          <path d="M6.5 15.5V6.5H11.5L15.5 10V15.5Z" fill="#fff" stroke={GREY} />
          <path d="M11 6.5V10H15" stroke={GREY} />
          <path d="M5.5 0V4M15.5 0V4M0 5.5H4M0 15.5H4" stroke={GREY} />
          <path d="M7 2H14M11.5 0 14 2 11.5 4M2 7V14M0 11.5 2 14 4 11.5" stroke={BLUE} strokeWidth="1.2" />
        </Icon>
        <span>800 × 600</span>
      </div>
      <div className="flex w-[110px] items-center">
        <Icon>
          <path d="M6.5 15.5V6.5H12L15.5 9.5V15.5Z" fill="#fff" stroke={GREY} />
          <path d="M11.5 7V10H15" stroke={GREY} />
          <path d="M3.5 7V16M7 3.5H16" stroke={GREY} strokeDasharray="1 1" />
          <path d="M3.5 0V6M.5 3.5H6.5" stroke={BLUE} />
        </Icon>
        <span>675, 30</span>
      </div>
      <button className="flex w-[52px] items-center gap-[9px]">
        <span>пикс</span>
        <span className="rotate-180"><Caret /></span>
      </button>
      <button className="w-[43px] text-left">100%</button>
      <IconButton label="По размеру окна">
        <Icon>
          <path d="M2.5 2.5H13.5V13.5H2.5Z" fill="#fff" stroke={GREY} />
          <path d="M4.5 11.5V9.5L6.5 7 8.5 9.5 10 8.5 11.5 10V11.5Z" fill={BLUE} />
          <path d="M0 0 4 4M16 0 12 4M0 16 4 12M16 16 12 12M1 4.5H4.5V1M11.5 1V4.5H15M1 11.5H4.5V15M11.5 15V11.5H15" stroke={BLUE} />
        </Icon>
      </IconButton>
      <span className="ml-[13px] flex">
        <IconButton label="Уменьшить">
          <Icon>
            <path d="M10.5 10.5 15 15" stroke={GREY} strokeWidth="2.6" />
            <circle cx="6.5" cy="6.5" r="5.6" fill="#fff" stroke="#888" strokeWidth="1.7" />
            <path d="M3.5 6.5H9.5" stroke={BLUE} strokeWidth="1.4" />
          </Icon>
        </IconButton>
      </span>
      <input
        type="range"
        aria-label="Масштаб"
        defaultValue={50}
        className="ml-2 h-4 w-[89px] appearance-none bg-[linear-gradient(#777,#777)] bg-[length:100%_1px] bg-center bg-no-repeat [&::-webkit-slider-thumb]:h-[15px] [&::-webkit-slider-thumb]:w-[11px] [&::-webkit-slider-thumb]:appearance-none [&::-webkit-slider-thumb]:rounded-t-[1px] [&::-webkit-slider-thumb]:rounded-b-[5px] [&::-webkit-slider-thumb]:border [&::-webkit-slider-thumb]:border-[#777] [&::-webkit-slider-thumb]:bg-[#e4e4e4]"
      />
      <span className="ml-[9px] flex">
        <IconButton label="Увеличить">
          <Icon>
            <path d="M10.5 10.5 15 15" stroke={GREY} strokeWidth="2.6" />
            <circle cx="6.5" cy="6.5" r="5.6" fill="#fff" stroke="#888" strokeWidth="1.7" />
            <path d="M3.5 6.5H9.5M6.5 3.5V9.5" stroke={BLUE} strokeWidth="1.4" />
          </Icon>
        </IconButton>
      </span>
      <span className="ml-[5px] self-end pb-1">
        <Icon size={10} box={10}>
          <path d="M8 0H10V2H8ZM4 4H6V6H4ZM8 4H10V6H8ZM0 8H2V10H0ZM4 8H6V10H4ZM8 8H10V10H8Z" fill="#b5b5b5" />
        </Icon>
      </span>
    </footer>
  )
}

export default function App() {
  return (
    <div className="flex min-h-screen flex-col bg-white font-['Roboto','Noto_Sans',sans-serif] text-[12px] leading-4 whitespace-nowrap text-black">
      <TitleBar />
      <MenuBar />
      <FileBar />
      <OptionsBar />
      <main className="relative mx-px flex flex-1 items-center justify-center bg-[#cfcfcf]">
        <div className="relative h-[602px] w-[802px] shrink-0 border border-[#a0a0a0] bg-white">
          {/* brush cursor */}
          <span className="absolute top-10 left-[697px] h-[3px] w-[3px] rounded-[1px] border border-black" />
        </div>
        <ToolsWindow />
        <HistoryWindow />
        <LayersWindow />
        <PaletteWindow />
      </main>
      <StatusBar />
    </div>
  )
}
